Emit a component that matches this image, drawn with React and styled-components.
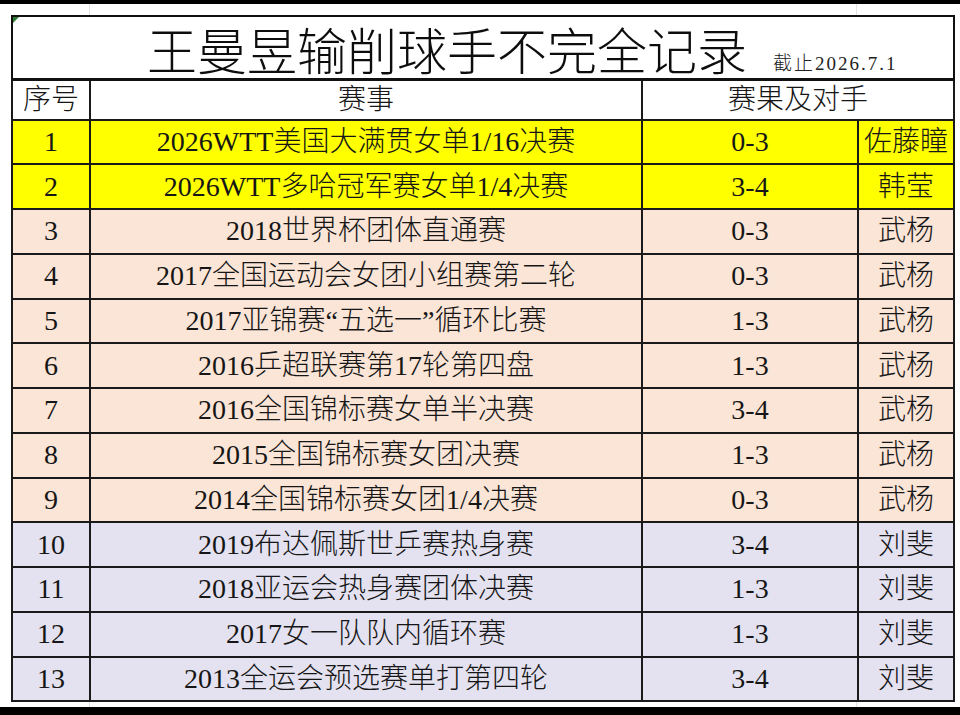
import styled, { createGlobalStyle } from "styled-components";

const GlobalStyle = createGlobalStyle`
  html, body {
    margin: 0;
    padding: 0;
    background: #ffffff;
  }
  body {
    font-family: "Liberation Serif", "Noto Sans CJK SC", serif;
    font-weight: 300;
    color: #161616;
  }
`;

const Screen = styled.div`
  display: flex;
  flex-direction: column;
  width: 960px;
  height: 715px;
  overflow: hidden;
`;

const BlackBar = styled.div`
  height: ${(p) => p.$h}px;
  background: #000;
  flex-shrink: 0;
`;

const Sheet = styled.div`
  flex: 1;
  padding: 11px 7px 0 11px;
  background-color: #fff;
  background-image: linear-gradient(to right, transparent 89px, #e2e2e2 89px, #e2e2e2 90px, transparent 90px),
    linear-gradient(to right, transparent 856px, #e2e2e2 856px, #e2e2e2 857px, transparent 857px);
`;

const Table = styled.table`
  width: 942px;
  border-collapse: collapse;
  table-layout: fixed;
  border: 2px solid #111;
`;

const Cell = styled.td`
  border: 2px solid #1a1a1a;
  padding: 0;
  text-align: center;
  vertical-align: middle;
  font-size: 28px;
  line-height: 1;
  white-space: nowrap;
  background: ${(p) => p.$bg || "#fff"};
`;

const TitleCell = styled.td`
  height: 60px;
  padding: 0 0 1px 134px;
  border: 2px solid #111;
  border-bottom-width: 3px;
  vertical-align: bottom;
  background: #fff;
  position: relative;
`;

const Corner = styled.span`
  position: absolute;
  left: 0;
  top: 0;
  width: 0;
  height: 0;
  border-top: 6px solid #2e7d32;
  border-right: 6px solid transparent;
`;

const TitleLine = styled.div`
  display: flex;
  align-items: baseline;
  white-space: nowrap;
`;

const TitleText = styled.span`
  font-family: "Noto Sans CJK SC", serif;
  font-size: 50px;
  line-height: 58px;
  color: #0d0d0d;
`;

const DateText = styled.span`
  margin-left: 26px;
  font-size: 19px;
  letter-spacing: 2px;
  color: #222;
`;

const HeaderRow = styled.tr`
  height: 40px;
`;

const DataRow = styled.tr`
  height: 44.75px;
`;

const colors = {
  yellow: "#ffff00",
  peach: "#fbe5d7",
  lavender: "#e4e2f0",
};

const rows = [
  ["1", "2026WTT美国大满贯女单1/16决赛", "0-3", "佐藤瞳", "yellow"],
  ["2", "2026WTT多哈冠军赛女单1/4决赛", "3-4", "韩莹", "yellow"],
  ["3", "2018世界杯团体直通赛", "0-3", "武杨", "peach"],
  ["4", "2017全国运动会女团小组赛第二轮", "0-3", "武杨", "peach"],
  ["5", "2017亚锦赛“五选一”循环比赛", "1-3", "武杨", "peach"],
  ["6", "2016乒超联赛第17轮第四盘", "1-3", "武杨", "peach"],
  ["7", "2016全国锦标赛女单半决赛", "3-4", "武杨", "peach"],
  ["8", "2015全国锦标赛女团决赛", "1-3", "武杨", "peach"],
  ["9", "2014全国锦标赛女团1/4决赛", "0-3", "武杨", "peach"],
  ["10", "2019布达佩斯世乒赛热身赛", "3-4", "刘斐", "lavender"],
  ["11", "2018亚运会热身赛团体决赛", "1-3", "刘斐", "lavender"],
  ["12", "2017女一队队内循环赛", "1-3", "刘斐", "lavender"],
  ["13", "2013全运会预选赛单打第四轮", "3-4", "刘斐", "lavender"],
];

export default function App() {
  return (
    <Screen>
      <GlobalStyle />
      <BlackBar $h={4} />
      <Sheet>
        <Table>
          <colgroup>
            <col style={{ width: 78 }} />
            <col style={{ width: 552 }} />
            <col style={{ width: 216 }} />
            <col style={{ width: 96 }} />
          </colgroup>
          <tbody>
            <tr>
              <TitleCell colSpan={4}>
                <Corner />
                <TitleLine>
                  <TitleText>王曼昱输削球手不完全记录</TitleText>
                  <DateText>截止2026.7.1</DateText>
                </TitleLine>
              </TitleCell>
            </tr>
            <HeaderRow>
              <Cell>序号</Cell>
              <Cell>赛事</Cell>
              <Cell colSpan={2}>赛果及对手</Cell>
            </HeaderRow>
            {rows.map(([no, event, score, opp, tone]) => (
              <DataRow key={no}>
                <Cell $bg={colors[tone]}>{no}</Cell>
                <Cell $bg={colors[tone]}>{event}</Cell>
                <Cell $bg={colors[tone]}>{score}</Cell>
                <Cell $bg={colors[tone]}>{opp}</Cell>
              </DataRow>
            ))}
          </tbody>
        </Table>
      </Sheet>
      <BlackBar $h={8} />
    </Screen>
  );
}
